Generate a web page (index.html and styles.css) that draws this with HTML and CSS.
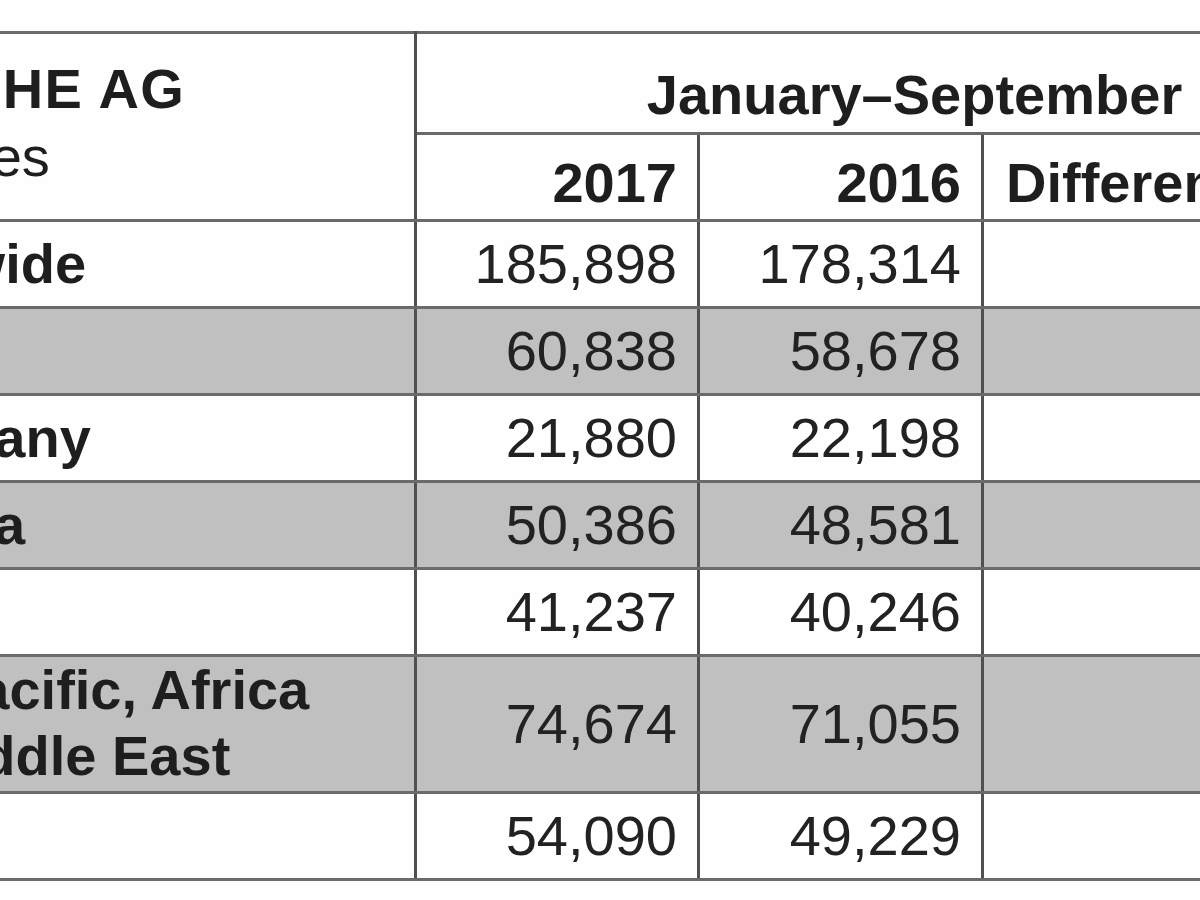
FILE: index.html
```html
<!DOCTYPE html>
<html lang="en">
<head>
<meta charset="utf-8">
<title>Porsche AG deliveries January–September</title>
<link rel="stylesheet" href="styles.css">
</head>
<body>
<div class="sheet">
  <table class="deliveries">
    <colgroup>
      <col class="c-label">
      <col class="c-num">
      <col class="c-num2">
      <col class="c-diff">
    </colgroup>
    <thead>
      <tr class="h1">
        <th class="title" rowspan="2"><span class="brand">PORSCHE AG</span><br><span class="sub">Deliveries</span></th>
        <th class="period" colspan="3">January–September</th>
      </tr>
      <tr class="h2">
        <th class="year">2017</th>
        <th class="year">2016</th>
        <th class="diff-h">Difference</th>
      </tr>
    </thead>
    <tbody>
      <tr>
        <th class="region">Worldwide</th>
        <td class="num">185,898</td>
        <td class="num">178,314</td>
        <td class="diff"></td>
      </tr>
      <tr class="shade">
        <th class="region">Europe</th>
        <td class="num">60,838</td>
        <td class="num">58,678</td>
        <td class="diff"></td>
      </tr>
      <tr>
        <th class="region sub-region">Germany</th>
        <td class="num">21,880</td>
        <td class="num">22,198</td>
        <td class="diff"></td>
      </tr>
      <tr class="shade">
        <th class="region">America</th>
        <td class="num">50,386</td>
        <td class="num">48,581</td>
        <td class="diff"></td>
      </tr>
      <tr>
        <th class="region">China</th>
        <td class="num">41,237</td>
        <td class="num">40,246</td>
        <td class="diff"></td>
      </tr>
      <tr class="shade tall">
        <th class="region">Asia-Pacific, Africa<br>and Middle East</th>
        <td class="num">74,674</td>
        <td class="num">71,055</td>
        <td class="diff"></td>
      </tr>
      <tr>
        <th class="region">USA</th>
        <td class="num">54,090</td>
        <td class="num">49,229</td>
        <td class="diff"></td>
      </tr>
    </tbody>
  </table>
</div>
</body>
</html>
```
FILE: styles.css
```css
html, body {
  margin: 0;
  padding: 0;
  background: #ffffff;
  overflow: hidden;
}

.sheet {
  width: 1200px;
  height: 900px;
  overflow: hidden;
  background: #fefefe;
  padding-top: 31px;
  box-sizing: border-box;
}

.deliveries {
  margin-left: -217px;
  border-collapse: collapse;
  table-layout: fixed;
  width: 1629px;
  font-family: "Liberation Sans", Arial, sans-serif;
  font-size: 56px;
  color: #1e1e1e;
}

.c-label { width: 631px; }
.c-num { width: 283px; }
.c-num2 { width: 284px; }
.c-diff { width: 431px; }

.deliveries th,
.deliveries td {
  border-top: 3px solid #6a6a6a;
  border-bottom: 3px solid #6a6a6a;
  border-left: 3px solid #505050;
  border-right: 3px solid #505050;
  padding: 0;
  line-height: 64px;
  white-space: nowrap;
  overflow: hidden;
}

.h1 th { height: 93px; }
.h2 th { height: 80px; }

.title {
  text-align: left;
  vertical-align: top;
  padding: 21px 0 0 10px !important;
  font-weight: 700;
  line-height: 68px !important;
}

.title .brand {
  letter-spacing: 1.5px;
}

.title .sub {
  font-weight: 400;
  margin-left: 8px;
}

.period {
  text-align: center;
  vertical-align: bottom;
  padding: 0 0 5px 0 !important;
  font-weight: 700;
}

.year {
  text-align: right;
  vertical-align: bottom;
  padding: 0 20px 4px 0 !important;
  font-weight: 700;
}

.diff-h {
  text-align: left;
  vertical-align: bottom;
  padding: 0 0 4px 22px !important;
  font-weight: 700;
}

tbody tr th,
tbody tr td {
  height: 84px;
  vertical-align: middle;
}

tbody tr.tall th,
tbody tr.tall td {
  height: 134px;
}

tbody tr.tall th.region {
  vertical-align: top;
}

.region {
  text-align: left;
  font-weight: 700;
  padding-left: 18px !important;
  line-height: 66px !important;
}

.sub-region {
  padding-left: 62px !important;
}

.num {
  text-align: right;
  padding-right: 20px !important;
  font-weight: 400;
  color: #222222;
}

.shade th,
.shade td {
  background: #c0c0c0;
}
```
